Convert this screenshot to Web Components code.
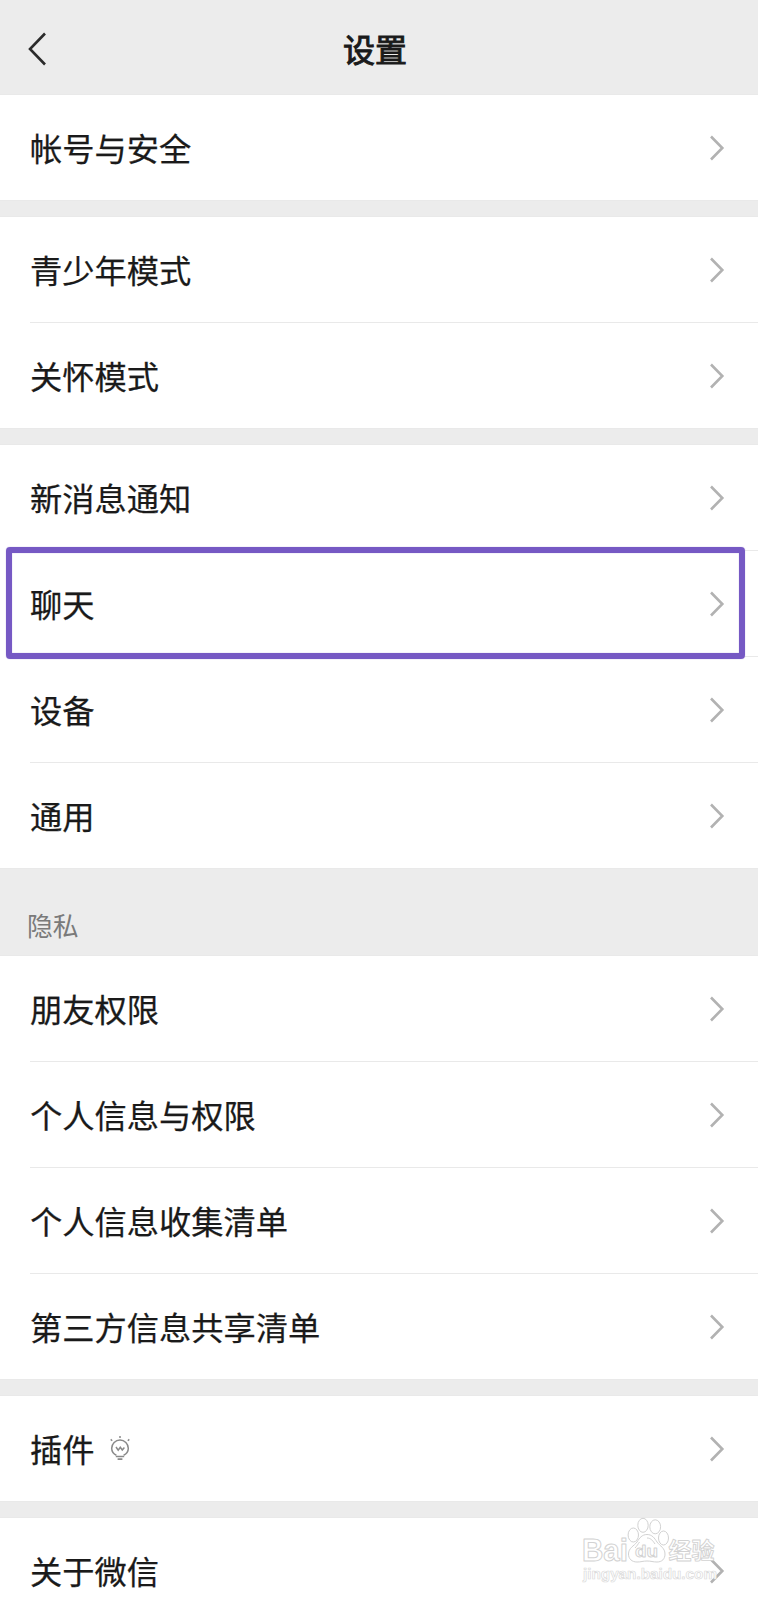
<!DOCTYPE html>
<html lang="zh-CN">
<head>
<meta charset="utf-8">
<title>设置</title>
<style>
    html, body {
        margin: 0;
        height: 1600px;
        overflow: hidden;
        background: #ececec;
    }

    body {
        --color-bg: #ececec;
        --color-text: #1a1a1a;
        --color-line: #e9e9e9;
        --color-edge: #e3e3e3;
        --color-mark: #7659c4;
        color: var(--color-text);
        font-family: "Noto Sans CJK SC", "Noto Sans", sans-serif;
    }
</style>
</head>
<body>
<settings-page>
    <nav-header slot="header">设置</nav-header>
    <settings-group>
        <settings-row>帐号与安全</settings-row>
    </settings-group>
    <settings-group>
        <settings-row>青少年模式</settings-row>
        <settings-row>关怀模式</settings-row>
    </settings-group>
    <settings-group>
        <settings-row>新消息通知</settings-row>
        <settings-row marked>聊天</settings-row>
        <settings-row>设备</settings-row>
        <settings-row>通用</settings-row>
    </settings-group>
    <settings-group group-label="隐私">
        <settings-row>朋友权限</settings-row>
        <settings-row>个人信息与权限</settings-row>
        <settings-row>个人信息收集清单</settings-row>
        <settings-row>第三方信息共享清单</settings-row>
    </settings-group>
    <settings-group>
        <settings-row>插件<bulb-icon slot="badge"></bulb-icon></settings-row>
    </settings-group>
    <settings-group>
        <settings-row>关于微信</settings-row>
    </settings-group>
    <site-watermark slot="overlay"></site-watermark>
</settings-page>

<script>
const define = (name, html, setup) => {
    const template = document.createElement('template');
    template.innerHTML = html;

    customElements.define(name, class extends HTMLElement {
        constructor() {
            super();
            this.attachShadow({mode: 'open'}).appendChild(template.content.cloneNode(true));
        }

        connectedCallback() {
            if (setup) setup(this, this.shadowRoot);
        }
    });
};

define('settings-page', `
    <style>
        :host {
            display: block;
            position: relative;
            width: 758px;
            height: 1600px;
            overflow: hidden;
        }

        .list {
            display: flex;
            flex-direction: column;
            gap: 17px;
        }
    </style>
    <slot name="header"></slot>
    <div class="list"><slot></slot></div>
    <slot name="overlay"></slot>
`);

define('nav-header', `
    <style>
        :host {
            display: grid;
            grid-template-columns: 60px 1fr 68px;
            align-items: center;
            box-sizing: border-box;
            height: 95px;
            border-bottom: 1px solid var(--color-edge);
            background: var(--color-bg);
        }

        svg {
            display: block;
            margin: 3px 0 0 26px;
        }

        .title {
            padding-top: 2px;
            font-size: 32px;
            line-height: 46px;
            text-align: center;
            -webkit-text-stroke: 1px currentColor;
        }
    </style>
    <svg width="24" height="36" viewBox="0 0 24 36" fill="none" stroke="#2b2b2b" stroke-width="2.6">
        <path d="M19 2.500 4 18 19 33.500"/>
    </svg>
    <div class="title"><slot></slot></div>
`);

define('settings-group', `
    <style>
        :host {
            display: block;
        }

        .label {
            display: none;
            box-sizing: border-box;
            height: 71px;
            padding: 21px 0 0 27px;
            color: #7a7a7a;
            font-size: 25.8px;
            line-height: 38px;
        }

        :host([group-label]) .label {
            display: block;
        }

        .rows {
            display: flex;
            flex-direction: column;
            gap: 1px;
            background: linear-gradient(to right, #fff 30px, var(--color-line) 30px);
            box-shadow: 0 -1px var(--color-line), 0 1px var(--color-line);
        }
    </style>
    <div class="label"></div>
    <div class="rows"><slot></slot></div>
`, (host, root) => {
    root.querySelector('.label').textContent = host.getAttribute('group-label') || '';
});

define('settings-row', `
    <style>
        :host {
            display: flex;
            position: relative;
            align-items: center;
            box-sizing: border-box;
            height: 105px;
            padding: 0 32px 0 30px;
            background: #fff;
        }

        .text {
            padding-bottom: 1px;
            font-size: 32.25px;
            line-height: 48px;
            white-space: nowrap;
            -webkit-text-stroke: 0.25px currentColor;
        }

        .chevron {
            display: block;
            margin-left: auto;
        }

        .mark {
            display: none;
            position: absolute;
            z-index: 1;
            top: -4px;
            left: 6px;
            box-sizing: border-box;
            width: 739px;
            height: 112px;
            border: 6px solid var(--color-mark);
            border-radius: 4px;
            box-shadow: 0 0 1px #9c86d8, inset 0 0 1px #9c86d8;
        }

        :host([marked]) .mark {
            display: block;
        }
    </style>
    <span class="text"><slot></slot></span>
    <slot name="badge"></slot>
    <svg class="chevron" width="18" height="30" viewBox="0 0 18 30" fill="none" stroke="#b2b2b2" stroke-width="2.6">
        <path d="M3 3.500 14.300 15 3 26.500"/>
    </svg>
    <div class="mark"></div>
`);

define('bulb-icon', `
    <style>
        :host {
            display: block;
            margin: 0 0 1px 14.5px;
        }

        svg {
            display: block;
        }
    </style>
    <svg width="22" height="26" viewBox="0 0 22 26" fill="none" stroke="#8a8a8a" stroke-width="1.5">
        <path d="M7.400 20.200C4.600 19 2.700 16.400 2.700 13.300a8.300 8.300 0 0 1 16.600 0c0 3.100-1.900 5.700-4.700 6.900"/>
        <path d="M7 12 9.200 15.200 11.300 12.200 13.300 15 15.400 12.600M11 1v2M1.700 4.400l1.500 1.300M20.300 4.400l-1.500 1.300"/>
        <path d="M6.800 21.500h8.400M8.600 24.200h4.800" stroke-width="1.700"/>
    </svg>
`);

define('site-watermark', `
    <style>
        :host {
            display: block;
            position: absolute;
            top: 1512px;
            left: 576px;
        }

        svg {
            display: block;
        }

        text {
            font-family: "Liberation Sans", "Noto Sans CJK SC", sans-serif;
        }
    </style>
    <svg width="150" height="76" viewBox="0 0 150 76" fill="#fff" stroke="#d2d2d2" stroke-width="1" stroke-linejoin="round">
        <text x="6" y="49" font-size="31" font-weight="700" textLength="46" lengthAdjust="spacingAndGlyphs">Bai</text>
        <ellipse cx="57.300" cy="23" rx="5.200" ry="7"/>
        <ellipse cx="67" cy="13.300" rx="5.200" ry="7"/>
        <ellipse cx="79.200" cy="14.800" rx="5.400" ry="7"/>
        <ellipse cx="87.500" cy="26" rx="5" ry="7"/>
        <path d="M71 22.500c5 0 7.500 3.500 10 7.500 3 4 8 6 8 12 0 5-3 8-8 8-4 0-6-1-10-1s-6 1-10 1c-5 0-8.500-3-8.500-8 0-6 5.500-8 8.500-12 2.500-4 5-7.500 10-7.500Z"/>
        <path d="M71 26c4 0 6 3 8 6M59 36c2-2 3-4 4.500-6" fill="none"/>
        <text x="59" y="44.500" font-size="17" font-weight="700" stroke-width="0.900" textLength="23" lengthAdjust="spacingAndGlyphs">du</text>
        <text x="92.500" y="47" font-size="23" font-weight="700" stroke-width="0.900" textLength="46" lengthAdjust="spacingAndGlyphs">经验</text>
        <text x="7" y="67" font-size="15.500" font-weight="700" stroke="#dadada" stroke-width="0.700" textLength="134" lengthAdjust="spacingAndGlyphs">jingyan.baidu.com</text>
    </svg>
`);
</script>
</body>
</html>
